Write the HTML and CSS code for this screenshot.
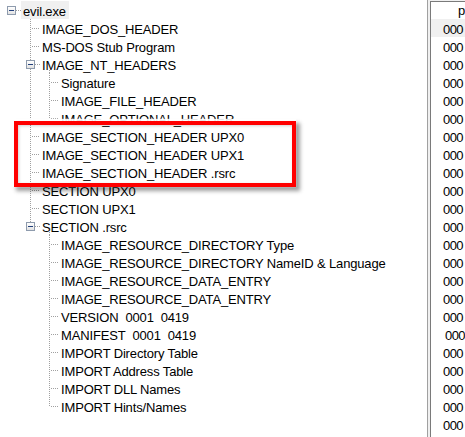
FILE: index.html
```html
<!DOCTYPE html>
<html>
<head>
<meta charset="utf-8">
<link rel="stylesheet" href="styles.css">
</head>
<body>
<div class="tree">
  <div class="row"><span class="g hx"><span class="box"></span></span><span class="label hl">evil.exe</span></div>
  <div class="row"><span class="g"></span><span class="g tee"></span><span class="label">IMAGE_DOS_HEADER</span></div>
  <div class="row"><span class="g"></span><span class="g tee"></span><span class="label">MS-DOS Stub Program</span></div>
  <div class="row"><span class="g"></span><span class="g pipe hx"><span class="box"></span></span><span class="g tail"></span><span class="label lbox">IMAGE_NT_HEADERS</span></div>
  <div class="row"><span class="g"></span><span class="g pipe"></span><span class="g tee"></span><span class="label">Signature</span></div>
  <div class="row"><span class="g"></span><span class="g pipe"></span><span class="g tee"></span><span class="label">IMAGE_FILE_HEADER</span></div>
  <div class="row"><span class="g"></span><span class="g pipe"></span><span class="g end"></span><span class="label">IMAGE_OPTIONAL_HEADER</span></div>
  <div class="row"><span class="g"></span><span class="g tee"></span><span class="label">IMAGE_SECTION_HEADER UPX0</span></div>
  <div class="row"><span class="g"></span><span class="g tee"></span><span class="label">IMAGE_SECTION_HEADER UPX1</span></div>
  <div class="row"><span class="g"></span><span class="g tee"></span><span class="label">IMAGE_SECTION_HEADER .rsrc</span></div>
  <div class="row"><span class="g"></span><span class="g tee"></span><span class="label">SECTION UPX0</span></div>
  <div class="row"><span class="g"></span><span class="g tee"></span><span class="label">SECTION UPX1</span></div>
  <div class="row"><span class="g"></span><span class="g half hx"><span class="box"></span></span><span class="g tail"></span><span class="label lbox">SECTION .rsrc</span></div>
  <div class="row"><span class="g"></span><span class="g"></span><span class="g tee"></span><span class="label">IMAGE_RESOURCE_DIRECTORY Type</span></div>
  <div class="row"><span class="g"></span><span class="g"></span><span class="g tee"></span><span class="label">IMAGE_RESOURCE_DIRECTORY NameID &amp; Language</span></div>
  <div class="row"><span class="g"></span><span class="g"></span><span class="g tee"></span><span class="label">IMAGE_RESOURCE_DATA_ENTRY</span></div>
  <div class="row"><span class="g"></span><span class="g"></span><span class="g tee"></span><span class="label">IMAGE_RESOURCE_DATA_ENTRY</span></div>
  <div class="row"><span class="g"></span><span class="g"></span><span class="g tee"></span><span class="label">VERSION&nbsp; 0001&nbsp; 0419</span></div>
  <div class="row"><span class="g"></span><span class="g"></span><span class="g tee"></span><span class="label">MANIFEST&nbsp; 0001&nbsp; 0419</span></div>
  <div class="row"><span class="g"></span><span class="g"></span><span class="g tee"></span><span class="label">IMPORT Directory Table</span></div>
  <div class="row"><span class="g"></span><span class="g"></span><span class="g tee"></span><span class="label">IMPORT Address Table</span></div>
  <div class="row"><span class="g"></span><span class="g"></span><span class="g tee"></span><span class="label">IMPORT DLL Names</span></div>
  <div class="row"><span class="g"></span><span class="g"></span><span class="g end"></span><span class="label">IMPORT Hints/Names</span></div>
  <div class="callout"></div>
</div>
<div class="panel">
  <div class="plist">
    <div class="phead">p</div>
    <div class="prow sel">000</div>
    <div class="prow">000</div>
    <div class="prow">000</div>
    <div class="prow">000</div>
    <div class="prow">000</div>
    <div class="prow">000</div>
    <div class="prow">000</div>
    <div class="prow">000</div>
    <div class="prow">000</div>
    <div class="prow">000</div>
    <div class="prow">000</div>
    <div class="prow">000</div>
    <div class="prow">000</div>
    <div class="prow">000</div>
    <div class="prow">000</div>
    <div class="prow">000</div>
    <div class="prow">000</div>
    <div class="prow shift">000</div>
    <div class="prow">000</div>
    <div class="prow">000</div>
    <div class="prow">000</div>
    <div class="prow">000</div>
    <div class="prow">000</div>
  </div>
</div>
</body>
</html>
```

FILE: styles.css
```css
html, body {
  margin: 0;
  padding: 0;
  background: #ffffff;
}
body {
  display: flex;
  width: 465px;
  height: 437px;
  overflow: hidden;
  font-family: "Liberation Sans", Arial, sans-serif;
  font-size: 13px;
  letter-spacing: -0.15px;
  color: #000;
}
.tree {
  position: relative;
  width: 427px;
  flex: none;
  padding: 1px 0 0 2px;
  box-sizing: border-box;
}
.row {
  display: flex;
  height: 18px;
  white-space: nowrap;
}
.g {
  flex: none;
  width: 19px;
  height: 18px;
  background-repeat: no-repeat;
}
.pipe {
  background-image: repeating-linear-gradient(to bottom, #a0a0a0 0 1px, transparent 1px 2px);
  background-position: 9px 0;
  background-size: 1px 18px;
}
.tee {
  background-image:
    repeating-linear-gradient(to bottom, #a0a0a0 0 1px, transparent 1px 2px),
    repeating-linear-gradient(to right, #a0a0a0 0 1px, transparent 1px 2px);
  background-position: 9px 0, 11px 9px;
  background-size: 1px 18px, 8px 1px;
}
.end {
  background-image:
    repeating-linear-gradient(to bottom, #a0a0a0 0 1px, transparent 1px 2px),
    repeating-linear-gradient(to right, #a0a0a0 0 1px, transparent 1px 2px);
  background-position: 9px 0, 11px 9px;
  background-size: 1px 10px, 8px 1px;
}
.half {
  background-image: repeating-linear-gradient(to bottom, #a0a0a0 0 1px, transparent 1px 2px);
  background-position: 9px 0;
  background-size: 1px 5px;
}
.tail {
  background-image: repeating-linear-gradient(to bottom, #a0a0a0 0 1px, transparent 1px 2px);
  background-position: 9px 15px;
  background-size: 1px 3px;
}
.hx {
  display: flex;
  align-items: flex-start;
}
.hx::after {
  content: "";
  width: 5px;
  height: 1px;
  margin-top: 9px;
  background: repeating-linear-gradient(to right, #a0a0a0 0 1px, transparent 1px 2px);
}
.box {
  flex: none;
  width: 9px;
  height: 9px;
  margin: 5px 0 0 5px;
  box-sizing: border-box;
  border: 1px solid #8e9bad;
  background: linear-gradient(#ffffff, #e2e2e2);
  display: flex;
  align-items: center;
  justify-content: center;
}
.box::after {
  content: "";
  width: 5px;
  height: 1px;
  background: #22407c;
}
.label {
  height: 18px;
  box-sizing: border-box;
  padding: 1.5px 2px 0 2px;
  line-height: 18px;
}
.lbox {
  margin-left: -19px;
}
.hl {
  background: #f0f0f0;
  padding-right: 3px;
}
.callout {
  position: absolute;
  left: 14px;
  top: 121px;
  width: 282px;
  height: 66px;
  box-sizing: border-box;
  border: 4px solid #ff0000;
  box-shadow:
    -1px -1px 1px 1px rgba(255, 255, 255, 0.9),
    3px 3px 4px 1px rgba(0, 0, 0, 0.38),
    inset 1px 1px 3px rgba(0, 0, 0, 0.18);
}
.panel {
  flex: 1;
  border-left: 1px solid #a0a0a0;
  padding: 1px 0 0 2px;
  background: #f0f0f0;
  overflow: hidden;
}
.plist {
  height: 100%;
  background: #ffffff;
  border-left: 1px solid #7a7a7a;
  border-top: 1px solid #7a7a7a;
  overflow: hidden;
}
.phead {
  height: 17px;
  line-height: 17px;
  padding-left: 27px;
  white-space: nowrap;
}
.prow {
  height: 18px;
  box-sizing: border-box;
  padding: 1.5px 0 0 12px;
  line-height: 18px;
  white-space: nowrap;
  letter-spacing: -0.6px;
}
.prow.sel {
  background: #f0f0f0;
}
.prow.shift {
  padding-left: 14px;
}
```
